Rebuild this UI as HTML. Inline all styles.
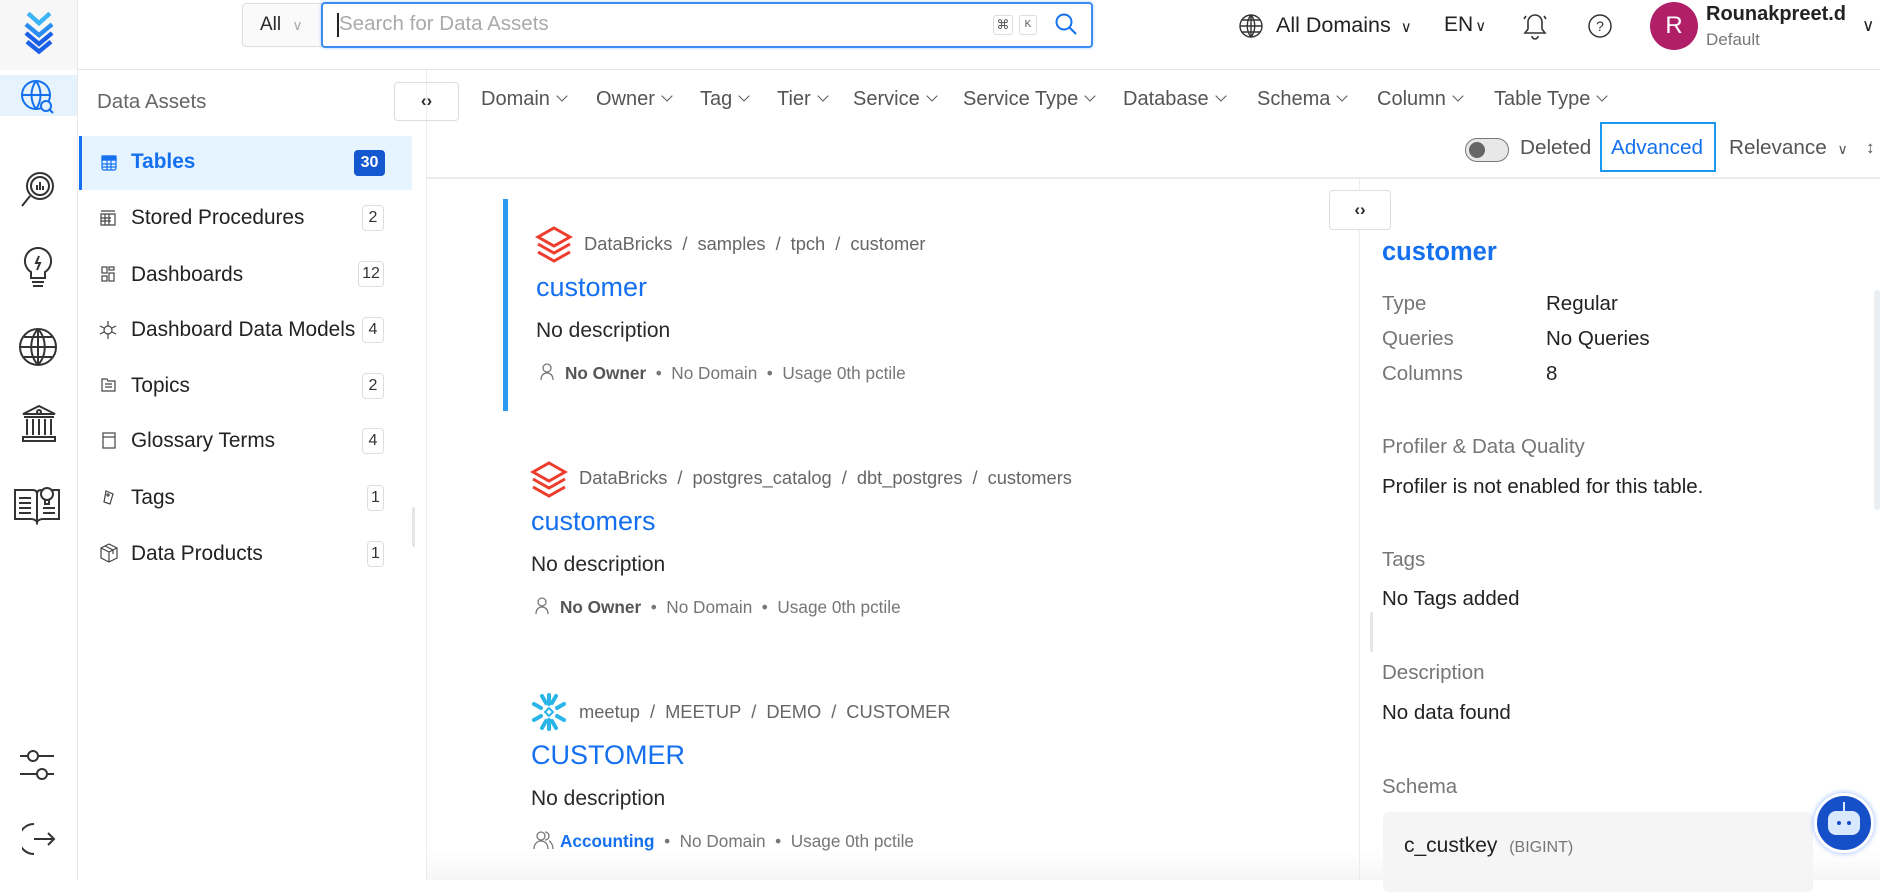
<!DOCTYPE html>
<html><head><meta charset="utf-8"><style>
*{box-sizing:border-box;margin:0;padding:0}
body{width:1880px;height:880px;overflow:hidden;background:#fff;font-family:"Liberation Sans",sans-serif;color:#292929;position:relative}
.a{position:absolute;white-space:nowrap}
.rail{position:absolute;left:0;top:0;width:78px;height:880px;background:#fff;border-right:1px solid #e8e8e8}
.g{color:#757575}
.blue{color:#1470ef}
.cnt{position:absolute;left:362px;width:22px;height:26px;border:1px solid #ddd;border-radius:4px;font-size:16px;text-align:center;line-height:24px;color:#333}
.si{position:absolute;left:131px;font-size:20.8px;color:#222}
.f{position:absolute;top:88px;font-size:20px;color:#555}
.f:after{content:"";display:inline-block;width:7px;height:7px;border-right:1.5px solid #555;border-bottom:1.5px solid #555;transform:rotate(45deg);margin-left:8px;position:relative;top:-5px}
.bc{font-size:18.3px;color:#666}
.bc i{font-style:normal;margin:0 10px}
.tt{font-size:27px;color:#1470ef}
.ds{font-size:21px;color:#292929}
.mt{font-size:17.2px;color:#767676}
.mt b{font-weight:bold;color:#555}
.lb{font-size:20.5px;color:#767676}
.vl{font-size:20.5px;color:#222}
</style></head><body>
<div class="rail">
 <div style="position:absolute;left:0;top:0;width:77px;height:70px;background:#f7f7f7"></div>
 <svg class="a" style="left:16px;top:9px" width="46" height="48" viewBox="0 0 42 44" fill="none" stroke-width="4"><path d="M11 4 L21 13 L31 4" stroke="#3bb5f5"/><path d="M9 14 L21 24 L33 14" stroke="#2a8ef0"/><path d="M9 22 L21 32 L33 22" stroke="#1a5fe8"/><path d="M10 30 L21 39 L32 30" stroke="#1a5fe8"/></svg>
 <div style="position:absolute;left:0;top:75px;width:77px;height:41px;background:#e6f3fc"></div>
 <svg class="a" style="left:18px;top:77px" width="40" height="40" viewBox="0 0 40 40" fill="none" stroke="#1470ef" stroke-width="2"><circle cx="18" cy="18" r="14"/><path d="M4 18h28M18 4c-6 8-6 20 0 28M18 4c6 8 6 20 0 28"/><circle cx="28" cy="29" r="5" fill="#e6f3fc"/><path d="M31 32l4 4"/></svg>
 <svg class="a" style="left:18px;top:168px" width="40" height="44" viewBox="0 0 40 44" fill="none" stroke="#333" stroke-width="2"><circle cx="22" cy="18" r="13"/><circle cx="22" cy="18" r="9"/><path d="M12 28L4 38"/><path d="M19 22v-5M22 22v-8M25 22v-4"/></svg>
 <svg class="a" style="left:22px;top:246px" width="32" height="44" viewBox="0 0 32 44" fill="none" stroke="#333" stroke-width="2"><path d="M16 2a13 13 0 0 0-7 24v6h14v-6a13 13 0 0 0-7-24z"/><path d="M10 36h12M11 40h10M17 10l-3 7h4l-3 7"/></svg>
 <svg class="a" style="left:17px;top:326px" width="42" height="42" viewBox="0 0 42 42" fill="none" stroke="#333" stroke-width="2"><circle cx="21" cy="21" r="18"/><path d="M3 21h36M21 3v36M7 11h28M7 31h28M21 3c-9 10-9 26 0 36M21 3c9 10 9 26 0 36"/></svg>
 <svg class="a" style="left:19px;top:403px" width="40" height="40" viewBox="0 0 40 40" fill="none" stroke="#333" stroke-width="2"><path d="M20 3l16 8H4z"/><circle cx="20" cy="9" r="2"/><path d="M5 14h30M8 16v16M14 16v16M20 16v16M26 16v16M32 16v16M4 34h32v4H4z"/></svg>
 <svg class="a" style="left:13px;top:480px" width="48" height="46" viewBox="0 0 48 46" fill="none" stroke="#333" stroke-width="2"><path d="M2 10h18q4 0 4 4v28q-2-3-6-3H2zM46 10H28q-4 0-4 4v28q2-3 6-3h16z"/><path d="M6 18h12M6 23h12M6 28h12M6 33h12M30 28h12M30 33h12"/><circle cx="34" cy="14" r="6" fill="#fff"/><path d="M32 20v4h4v-4"/></svg>
 <svg class="a" style="left:18px;top:748px" width="40" height="36" viewBox="0 0 40 36" fill="none" stroke="#333" stroke-width="2"><circle cx="15" cy="8" r="5"/><path d="M2 8h8M20 8h16"/><circle cx="24" cy="26" r="5"/><path d="M2 26h17M29 26h7"/></svg>
 <svg class="a" style="left:22px;top:822px" width="36" height="34" viewBox="0 0 36 34" fill="none" stroke="#333" stroke-width="2"><path d="M12 2a15 15 0 0 0 0 30"/><path d="M12 17h20M26 11l6 6-6 6"/></svg>
</div>
<!-- header -->
<div style="position:absolute;left:78px;top:69px;width:1802px;height:1px;background:#e6e6e6"></div>
<div class="a" style="left:242px;top:3px;width:80px;height:44px;border:1px solid #ddd;border-radius:4px 0 0 4px;background:#fafafa;font-size:19px;line-height:42px;padding-left:17px">All <span style="color:#aaa;font-size:14px;margin-left:6px">∨</span></div>
<div class="a" style="left:321px;top:2px;width:772px;height:46px;border:2px solid #3d8cf0;border-radius:4px;box-shadow:0 0 3px #a8ccf8"></div>
<div class="a" style="left:337px;top:13px;height:24px;width:1.5px;background:#222"></div>
<div class="a g" style="left:339px;top:12px;font-size:20.5px;color:#aaa">Search for Data Assets</div>
<div class="a" style="left:993px;top:15px;width:20px;height:20px;border:1px solid #ddd;border-radius:3px;font-size:13px;text-align:center;line-height:18px;color:#555">⌘</div>
<div class="a" style="left:1019px;top:15px;width:18px;height:20px;border:1px solid #ddd;border-radius:3px;font-size:10px;text-align:center;line-height:18px;color:#555">K</div>
<svg class="a" style="left:1054px;top:12px" width="24" height="24" viewBox="0 0 24 24" fill="none" stroke="#1470ef" stroke-width="2"><circle cx="10" cy="10" r="7.5"/><path d="M15.5 15.5L22 22"/></svg>
<svg class="a" style="left:1239px;top:14px" width="24" height="24" viewBox="0 0 24 24" fill="none" stroke="#333" stroke-width="1.4"><circle cx="12" cy="12" r="11"/><path d="M1 12h22M12 1v22M3 6h18M3 18h18M12 1c-5 6-5 16 0 22M12 1c5 6 5 16 0 22"/></svg>
<div class="a" style="left:1276px;top:13px;font-size:21.5px;color:#222">All Domains <span style="font-size:15px;margin-left:4px">∨</span></div>
<div class="a" style="left:1444px;top:13px;font-size:21px;color:#222">EN<span style="font-size:15px;margin-left:2px">∨</span></div>
<svg class="a" style="left:1522px;top:12px" width="26" height="28" viewBox="0 0 26 28" fill="none" stroke="#333" stroke-width="1.6"><path d="M13 3a7 7 0 0 0-7 7v7l-3 4h20l-3-4v-7a7 7 0 0 0-7-7zM10 24a3 3 0 0 0 6 0M4 4L2 7M22 4l2 3"/></svg>
<svg class="a" style="left:1588px;top:14px" width="24" height="24" viewBox="0 0 24 24" fill="none" stroke="#333" stroke-width="1.5"><circle cx="12" cy="12" r="11"/><text x="12" y="17" font-size="14" text-anchor="middle" fill="#333" stroke="none" font-family="Liberation Sans">?</text></svg>
<div class="a" style="left:1650px;top:2px;width:48px;height:48px;border-radius:50%;background:#b01f67;color:#fff;font-size:24px;text-align:center;line-height:48px">R</div>
<div class="a" style="left:1706px;top:3px;font-size:20px;font-weight:bold;color:#222">Rounakpreet.d</div>
<div class="a" style="left:1706px;top:30px;font-size:17px;color:#777">Default</div>
<div class="a" style="left:1862px;top:16px;font-size:17px;color:#222">∨</div>
<!-- sidebar -->
<div style="position:absolute;left:426px;top:70px;width:1px;height:810px;background:#ececec"></div>
<div class="a" style="left:97px;top:90px;font-size:20.5px;color:#666">Data Assets</div>
<div class="a" style="left:79px;top:136px;width:333px;height:54px;background:#e6f4ff;border-left:3px solid #1470ef"></div>
<svg class="a" style="left:101px;top:155px" width="16" height="16" viewBox="0 0 16 16" fill="none" stroke="#1470ef" stroke-width="1.2"><rect x="1" y="1" width="14" height="14" rx="2"/><path d="M1 5h14M1 9h14M1 12h14M6 5v10M10 5v10"/><rect x="1" y="1" width="14" height="4" fill="#1470ef"/></svg>
<div class="si" style="top:150px;color:#1470ef;font-weight:bold">Tables</div>
<div class="cnt" style="left:354px;top:150px;width:31px;background:#1458d0;border-color:#1458d0;color:#fff;font-weight:bold">30</div>
<div class="si" style="top:206px">Stored Procedures</div><div class="cnt" style="top:205px">2</div>
<div class="si" style="top:263px">Dashboards</div><div class="cnt" style="top:261px;width:26px;left:358px">12</div>
<div class="si" style="top:318px">Dashboard Data Models</div><div class="cnt" style="top:317px">4</div>
<div class="si" style="top:374px">Topics</div><div class="cnt" style="top:373px">2</div>
<div class="si" style="top:429px">Glossary Terms</div><div class="cnt" style="top:428px">4</div>
<div class="si" style="top:486px">Tags</div><div class="cnt" style="top:485px;left:367px;width:17px">1</div>
<div class="si" style="top:542px">Data Products</div><div class="cnt" style="top:541px;left:367px;width:17px">1</div>
<svg class="a" style="left:99px;top:209px" width="18" height="18" viewBox="0 0 18 18" fill="none" stroke="#444" stroke-width="1.2"><path d="M2 2h14M2 5h14v11H2zM2 9h10M2 12h10M6 5v11M10 5v11"/></svg>
<svg class="a" style="left:101px;top:266px" width="14" height="16" viewBox="0 0 14 16" fill="none" stroke="#444" stroke-width="1.2"><rect x="1" y="1" width="5" height="6"/><rect x="8" y="1" width="5" height="3"/><rect x="1" y="10" width="5" height="5"/><rect x="8" y="7" width="5" height="8"/></svg>
<svg class="a" style="left:99px;top:320px" width="18" height="20" viewBox="0 0 18 20" fill="none" stroke="#444" stroke-width="1.2"><circle cx="9" cy="10" r="4"/><path d="M9 1v5M9 14v5M1 6l4 2M17 6l-4 2M1 14l4-2M17 14l-4-2"/></svg>
<svg class="a" style="left:101px;top:377px" width="15" height="15" viewBox="0 0 15 15" fill="none" stroke="#444" stroke-width="1.2"><path d="M1 2h5l1 2h7v10H1z M4 7h7M4 10h7"/></svg>
<svg class="a" style="left:102px;top:432px" width="14" height="17" viewBox="0 0 14 17" fill="none" stroke="#444" stroke-width="1.2"><rect x="1" y="1" width="12" height="15"/><path d="M1 5h12"/></svg>
<svg class="a" style="left:101px;top:489px" width="15" height="17" viewBox="0 0 15 17" fill="none" stroke="#444" stroke-width="1.2"><path d="M5 2l7 3-3 10-6-2z"/><circle cx="7" cy="6" r="1"/></svg>
<svg class="a" style="left:99px;top:543px" width="20" height="20" viewBox="0 0 20 20" fill="none" stroke="#444" stroke-width="1.2"><path d="M10 1l8 4v10l-8 4-8-4V5zM2 5l8 4 8-4M10 9v10M6 3l8 4v4"/></svg>
<div class="a" style="left:412px;top:507px;width:3px;height:40px;background:#e5e5e5;border-radius:2px"></div>
<!-- filters -->
<div class="a" style="left:394px;top:82px;width:65px;height:39px;border:1px solid #ddd;border-radius:4px;text-align:center;line-height:36px;font-size:17px;font-weight:bold">‹›</div>
<div class="f" style="left:481px">Domain</div>
<div class="f" style="left:596px">Owner</div>
<div class="f" style="left:700px">Tag</div>
<div class="f" style="left:777px">Tier</div>
<div class="f" style="left:853px">Service</div>
<div class="f" style="left:963px">Service Type</div>
<div class="f" style="left:1123px">Database</div>
<div class="f" style="left:1257px">Schema</div>
<div class="f" style="left:1377px">Column</div>
<div class="f" style="left:1494px">Table Type</div>
<div class="a" style="left:1465px;top:138px;width:44px;height:24px;border-radius:12px;background:#e8e8e8;border:1.5px solid #777"></div>
<div class="a" style="left:1469px;top:142px;width:16px;height:16px;border-radius:50%;background:#666"></div>
<div class="a" style="left:1520px;top:136px;font-size:20.7px;color:#555">Deleted</div>
<div class="a" style="left:1600px;top:122px;width:116px;height:50px;border:2px solid #1a98f0"></div>
<div class="a" style="left:1611px;top:136px;font-size:20.7px;color:#1470ef">Advanced</div>
<div class="a" style="left:1729px;top:136px;font-size:20.7px;color:#555">Relevance <span style="font-size:14px;margin-left:5px">∨</span></div>
<div class="a" style="left:1866px;top:138px;font-size:17px;color:#555">↕</div>
<div style="position:absolute;left:427px;top:177px;width:1453px;height:2px;background:#ececec"></div>
<!-- cards -->
<div class="a" style="left:503px;top:199px;width:5px;height:212px;background:#2b9af3"></div>
<svg class="a" style="left:535px;top:226px" width="38" height="38" viewBox="0 0 38 38" fill="none" stroke="#ee3d2c" stroke-width="3"><path d="M19 2L35 11 19 20 3 11z"/><path d="M3 18l16 9 16-9M3 26l16 9 16-9"/></svg>
<div class="a bc" style="left:584px;top:233px">DataBricks<i>/</i>samples<i>/</i>tpch<i>/</i>customer</div>
<div class="a tt" style="left:536px;top:272px">customer</div>
<div class="a ds" style="left:536px;top:319px">No description</div>
<svg class="a" style="left:539px;top:363px" width="16" height="18" viewBox="0 0 16 18" fill="none" stroke="#777" stroke-width="1.3"><circle cx="8" cy="5" r="4"/><path d="M2 17c0-5 3-7 6-7s6 2 6 7"/></svg>
<div class="a mt" style="left:565px;top:363px"><b>No Owner</b> &nbsp;•&nbsp; No Domain &nbsp;•&nbsp; Usage 0th pctile</div>

<svg class="a" style="left:530px;top:461px" width="38" height="38" viewBox="0 0 38 38" fill="none" stroke="#ee3d2c" stroke-width="3"><path d="M19 2L35 11 19 20 3 11z"/><path d="M3 18l16 9 16-9M3 26l16 9 16-9"/></svg>
<div class="a bc" style="left:579px;top:467px">DataBricks<i>/</i>postgres_catalog<i>/</i>dbt_postgres<i>/</i>customers</div>
<div class="a tt" style="left:531px;top:506px">customers</div>
<div class="a ds" style="left:531px;top:553px">No description</div>
<svg class="a" style="left:534px;top:597px" width="16" height="18" viewBox="0 0 16 18" fill="none" stroke="#777" stroke-width="1.3"><circle cx="8" cy="5" r="4"/><path d="M2 17c0-5 3-7 6-7s6 2 6 7"/></svg>
<div class="a mt" style="left:560px;top:597px"><b>No Owner</b> &nbsp;•&nbsp; No Domain &nbsp;•&nbsp; Usage 0th pctile</div>

<svg class="a" style="left:530px;top:692px" width="38" height="40" viewBox="0 0 38 40" fill="none" stroke="#29b5e8" stroke-width="4" stroke-linecap="round"><path d="M19 3v9M19 28v9M4 12l7 4M34 12l-7 4M4 28l7-4M34 28l-7-4M12 4l4 7M26 4l-4 7M12 36l4-7M26 36l-4-7"/><path d="M19 16l4 4-4 4-4-4z" stroke-width="2"/></svg>
<div class="a bc" style="left:579px;top:701px">meetup<i>/</i>MEETUP<i>/</i>DEMO<i>/</i>CUSTOMER</div>
<div class="a tt" style="left:531px;top:740px">CUSTOMER</div>
<div class="a ds" style="left:531px;top:787px">No description</div>
<svg class="a" style="left:532px;top:830px" width="22" height="20" viewBox="0 0 22 20" fill="none" stroke="#777" stroke-width="1.3"><circle cx="9" cy="6" r="4"/><path d="M2 19c0-5 3-8 7-8s7 3 7 8M13 2a4 4 0 0 1 0 8M17 11c2 1 4 4 4 8"/></svg>
<div class="a mt" style="left:560px;top:831px"><span class="blue" style="font-weight:bold">Accounting</span> &nbsp;•&nbsp; No Domain &nbsp;•&nbsp; Usage 0th pctile</div>
<div class="a" style="left:427px;top:850px;width:1453px;height:30px;background:linear-gradient(rgba(255,255,255,0),rgba(240,240,240,.6))"></div>
<!-- right panel -->
<div style="position:absolute;left:1359px;top:179px;width:1px;height:701px;background:#ececec"></div>
<div class="a" style="left:1329px;top:190px;width:62px;height:40px;border:1px solid #ddd;border-radius:4px;background:#fff;text-align:center;line-height:38px;font-size:17px;font-weight:bold">‹›</div>
<div class="a" style="left:1370px;top:612px;width:3px;height:40px;background:#e5e5e5;border-radius:2px"></div>
<div class="a" style="left:1874px;top:290px;width:6px;height:220px;background:#e8eef2;border-radius:3px"></div>
<div class="a tt" style="left:1382px;top:238px;font-weight:bold;font-size:25.5px">customer</div>
<div class="a lb" style="left:1382px;top:292px">Type</div><div class="a vl" style="left:1546px;top:292px">Regular</div>
<div class="a lb" style="left:1382px;top:327px">Queries</div><div class="a vl" style="left:1546px;top:327px">No Queries</div>
<div class="a lb" style="left:1382px;top:362px">Columns</div><div class="a vl" style="left:1546px;top:362px">8</div>
<div class="a lb" style="left:1382px;top:435px">Profiler &amp; Data Quality</div>
<div class="a vl" style="left:1382px;top:475px">Profiler is not enabled for this table.</div>
<div class="a lb" style="left:1382px;top:548px">Tags</div>
<div class="a vl" style="left:1382px;top:587px">No Tags added</div>
<div class="a lb" style="left:1382px;top:661px">Description</div>
<div class="a vl" style="left:1382px;top:701px">No data found</div>
<div class="a lb" style="left:1382px;top:775px">Schema</div>
<div class="a" style="left:1383px;top:812px;width:430px;height:80px;background:#f5f5f5;border-radius:6px"></div>
<div class="a" style="left:1404px;top:834px;font-size:21px;color:#222">c_custkey <span style="font-size:16px;color:#777;margin-left:6px">(BIGINT)</span></div>
<div class="a" style="left:1814px;top:793px;width:60px;height:60px;border-radius:50%;background:#1650c8;border:3px solid #fff;box-shadow:0 0 6px #8fb4ff"></div>
<div class="a" style="left:1828px;top:811px;width:32px;height:24px;border-radius:8px;background:#d8e8ff"></div>
<div class="a" style="left:1837px;top:821px;width:4px;height:4px;border-radius:50%;background:#1650c8"></div>
<div class="a" style="left:1847px;top:821px;width:4px;height:4px;border-radius:50%;background:#1650c8"></div>
<div class="a" style="left:1843px;top:802px;width:2px;height:9px;background:#d8e8ff"></div>
</body></html>
